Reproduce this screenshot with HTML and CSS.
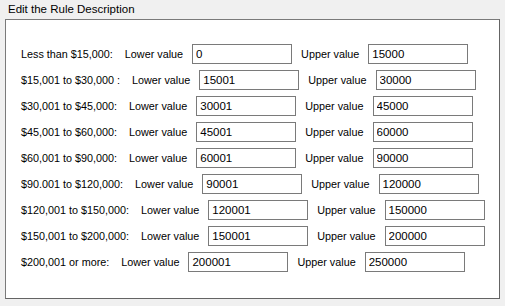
FILE: index.html
```html
<!DOCTYPE html>
<html lang="en">
<head>
  <meta charset="UTF-8">
  <title>Edit the Rule Description</title>
  <link rel="stylesheet" href="styles.css">
</head>
<body>
  <div class="caption">Edit the Rule Description</div>

  <div class="panel">
    <div class="rule-row">
      <span class="range">Less than $15,000:</span>
      <span class="field-label">Lower value</span>
      <input class="value-box" type="text" value="0">
      <span class="field-label">Upper value</span>
      <input class="value-box" type="text" value="15000">
    </div>
    <div class="rule-row">
      <span class="range">$15,001 to $30,000 :</span>
      <span class="field-label">Lower value</span>
      <input class="value-box" type="text" value="15001">
      <span class="field-label">Upper value</span>
      <input class="value-box" type="text" value="30000">
    </div>
    <div class="rule-row">
      <span class="range">$30,001 to $45,000:</span>
      <span class="field-label">Lower value</span>
      <input class="value-box" type="text" value="30001">
      <span class="field-label">Upper value</span>
      <input class="value-box" type="text" value="45000">
    </div>
    <div class="rule-row">
      <span class="range">$45,001 to $60,000:</span>
      <span class="field-label">Lower value</span>
      <input class="value-box" type="text" value="45001">
      <span class="field-label">Upper value</span>
      <input class="value-box" type="text" value="60000">
    </div>
    <div class="rule-row">
      <span class="range">$60,001 to $90,000:</span>
      <span class="field-label">Lower value</span>
      <input class="value-box" type="text" value="60001">
      <span class="field-label">Upper value</span>
      <input class="value-box" type="text" value="90000">
    </div>
    <div class="rule-row">
      <span class="range">$90.001 to $120,000:</span>
      <span class="field-label">Lower value</span>
      <input class="value-box" type="text" value="90001">
      <span class="field-label">Upper value</span>
      <input class="value-box" type="text" value="120000">
    </div>
    <div class="rule-row">
      <span class="range">$120,001 to $150,000:</span>
      <span class="field-label">Lower value</span>
      <input class="value-box" type="text" value="120001">
      <span class="field-label">Upper value</span>
      <input class="value-box" type="text" value="150000">
    </div>
    <div class="rule-row">
      <span class="range">$150,001 to $200,000:</span>
      <span class="field-label">Lower value</span>
      <input class="value-box" type="text" value="150001">
      <span class="field-label">Upper value</span>
      <input class="value-box" type="text" value="200000">
    </div>
    <div class="rule-row">
      <span class="range">$200,001 or more:</span>
      <span class="field-label">Lower value</span>
      <input class="value-box" type="text" value="200001">
      <span class="field-label">Upper value</span>
      <input class="value-box" type="text" value="250000">
    </div>
  </div>
</body>
</html>
```

FILE: styles.css
```css
* {
  margin: 0;
  padding: 0;
  box-sizing: border-box;
}

body {
  font-family: "Liberation Sans", Arial, sans-serif;
  font-size: 10.8px;
  color: #000;
  background: #f0f0f0;
  width: 505px;
  height: 306px;
  overflow: hidden;
}

.caption {
  height: 19px;
  padding: 3px 0 0 8px;
  line-height: 13px;
  font-size: 11.5px;
}

.panel {
  margin-left: 5px;
  width: 495px;
  height: 280px;
  background: #fff;
  border: 1px solid #7a7a7a;
  border-right-color: #646464;
  border-bottom-color: #646464;
  padding: 24px 0 0 15px;
  display: flex;
  flex-direction: column;
  gap: 6px;
}

.rule-row {
  display: flex;
  align-items: center;
  height: 20px;
  white-space: nowrap;
}

.rule-row > * {
  flex-shrink: 0;
}

.range {
  margin-right: 12px;
}

.field-label {
  margin-right: 9px;
}

.value-box {
  width: 100px;
  height: 20px;
  border: 1px solid #7a7a7a;
  padding: 0 3px;
  font-family: inherit;
  font-size: 11.5px;
  color: #000;
  background: #fff;
  outline: none;
  margin-right: 9px;
}
```
